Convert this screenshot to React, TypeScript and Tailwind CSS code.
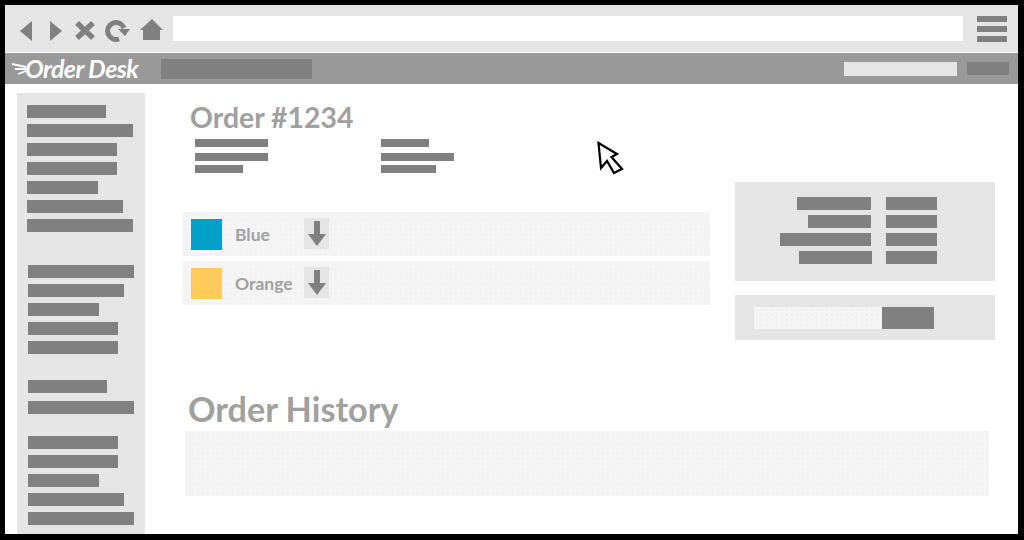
import React from "react";

const Bar = ({ className }: { className: string }) => <div className={`bg-[#808080] ${className}`} />;

const NavIcons = () => (
  <svg width="146" height="28" viewBox="0 0 146 28" className="shrink-0">
    <path d="M0 16 L12 6 V26 Z" fill="#808080" />
    <path d="M30 6 L42 16 L30 26 Z" fill="#808080" />
    <path d="M57 8 L73 23 M73 8 L57 23" stroke="#808080" strokeWidth="5.500" fill="none" />
    <path d="M99 24 A 8.500 8.500 0 1 1 104 13" stroke="#808080" strokeWidth="5" fill="none" />
    <path d="M98 14 H110 L105 21 Z" fill="#808080" />
    <path d="M120 15 L132 4 L143 15 H140 V25 H123 V15 Z" fill="#808080" />
  </svg>
);

const ArrowDown = () => (
  <svg width="18" height="27" viewBox="0 0 18 27">
    <path d="M6 1 H12 V14 H18 L9 26 L0 14 H6 Z" fill="#808080" />
  </svg>
);

const Sidebar = () => (
  <div className="w-[128px] ml-3 mt-[9px] bg-[#e5e5e5] pt-3 pl-[10px] flex flex-col shrink-0">
    <div className="flex flex-col gap-[6px]">
      <Bar className="h-[13px] w-[79px]" />
      <Bar className="h-[13px] w-[106px]" />
      <Bar className="h-[13px] w-[90px]" />
      <Bar className="h-[13px] w-[90px]" />
      <Bar className="h-[13px] w-[71px]" />
      <Bar className="h-[13px] w-[96px]" />
      <Bar className="h-[13px] w-[106px]" />
    </div>
    <div className="flex flex-col gap-[6px] mt-[33px] ml-px">
      <Bar className="h-[13px] w-[106px]" />
      <Bar className="h-[13px] w-[96px]" />
      <Bar className="h-[13px] w-[71px]" />
      <Bar className="h-[13px] w-[90px]" />
      <Bar className="h-[13px] w-[90px]" />
    </div>
    <div className="flex flex-col gap-[8px] mt-[26px] ml-px">
      <Bar className="h-[13px] w-[79px]" />
      <Bar className="h-[13px] w-[106px]" />
    </div>
    <div className="flex flex-col gap-[6px] mt-[22px] ml-px">
      <Bar className="h-[13px] w-[90px]" />
      <Bar className="h-[13px] w-[90px]" />
      <Bar className="h-[13px] w-[71px]" />
      <Bar className="h-[13px] w-[96px]" />
      <Bar className="h-[13px] w-[106px]" />
    </div>
  </div>
);

const ItemRow = ({ color, name, className }: { color: string; name: string; className: string }) => (
  <div className={`h-[44px] bg-[#f4f4f4] bg-[radial-gradient(#f0f0f0_1px,transparent_1px)] bg-[length:5px_5px] flex items-center ${className}`}>
    <div className={`w-[31px] h-[31px] ml-2 shrink-0 ${color}`} />
    <div className="ml-[13px] mt-[2px] w-[69px] text-[17.500px] font-bold text-[#a0a0a0] shrink-0">{name}</div>
    <div className="w-[25px] h-[31px] -mt-px bg-[#e5e5e5] flex items-center justify-center">
      <ArrowDown />
    </div>
  </div>
);

export default function App() {
  return (
    <div className="w-[1024px] h-[540px] bg-black pt-[5px] pl-[5px] pr-[6px] pb-[6px] overflow-hidden" style={{ fontFamily: "Lato, 'Liberation Sans', sans-serif" }}>
      <div className="h-full bg-white flex flex-col">
        {/* browser chrome */}
        <div className="h-[47px] bg-[#e5e5e5] flex items-center pl-[15px] shrink-0">
          <NavIcons />
          <div className="ml-[7px] w-[790px] h-[25px] bg-white" />
          <div className="ml-[14px] flex flex-col gap-[4px]">
            <Bar className="w-[30px] h-[6px]" />
            <Bar className="w-[30px] h-[6px]" />
            <Bar className="w-[30px] h-[6px]" />
          </div>
        </div>
        {/* app header */}
        <div className="h-[31px] mt-px bg-[#999999] flex items-center shrink-0">
          <svg width="16" height="14" viewBox="0 0 16 14" className="ml-[7px] shrink-0">
            <path d="M0 2 L14 5 M3 7 L14 7 M6 12 L14 9" stroke="#fff" strokeWidth="1.800" fill="none" />
          </svg>
          <div className="w-[121px] -ml-[3px] text-[25px] leading-none italic font-bold text-white tracking-[-0.6px] whitespace-nowrap">Order Desk</div>
          <Bar className="ml-[15px] w-[151px] h-[20px]" />
          <div className="ml-[532px] w-[113px] h-[14px] bg-[#e5e5e5]" />
          <Bar className="ml-[10px] w-[42px] h-[13px]" />
        </div>
        {/* body */}
        <div className="flex flex-1 min-h-0">
          <Sidebar />
          <div className="flex-1 flex flex-col relative">
            <div className="flex">
              <div className="ml-[38px] w-[527px] shrink-0">
                <h1 className="ml-[7px] mt-[15px] text-[28.400px] leading-[36px] font-bold text-[#a0a0a0]">Order #1234</h1>
                <div className="flex mt-[4px] ml-[12px]">
                  <div className="flex flex-col w-[186px]">
                    <Bar className="w-[73px] h-[8px]" />
                    <Bar className="w-[73px] h-[8px] mt-[6px]" />
                    <Bar className="w-[48px] h-[8px] mt-[4px]" />
                  </div>
                  <div className="flex flex-col">
                    <Bar className="w-[48px] h-[8px]" />
                    <Bar className="w-[73px] h-[8px] mt-[6px]" />
                    <Bar className="w-[55px] h-[8px] mt-[4px]" />
                  </div>
                </div>
                <ItemRow color="bg-[#00a0c8]" name="Blue" className="mt-[39px]" />
                <ItemRow color="bg-[#ffcc5c]" name="Orange" className="mt-[5px]" />
              </div>
              <div className="ml-[25px] w-[260px] shrink-0 mt-[98px]">
                <div className="h-[99px] bg-[#e5e5e5] pt-[15px] flex">
                  <div className="w-[136px] flex flex-col items-end gap-[5px] shrink-0">
                    <Bar className="w-[74px] h-[13px]" />
                    <Bar className="w-[63px] h-[13px]" />
                    <Bar className="w-[91px] h-[13px]" />
                    <Bar className="w-[73px] h-[13px] mr-[-1px]" />
                  </div>
                  <div className="ml-[15px] flex flex-col gap-[5px]">
                    <Bar className="w-[51px] h-[13px]" />
                    <Bar className="w-[51px] h-[13px]" />
                    <Bar className="w-[51px] h-[13px]" />
                    <Bar className="w-[51px] h-[13px]" />
                  </div>
                </div>
                <div className="mt-[14px] h-[45px] bg-[#e5e5e5] flex items-center pl-[19px]">
                  <div className="w-[128px] h-[22px] bg-[#f4f4f4] bg-[radial-gradient(#eeeeee_1px,transparent_1px)] bg-[length:5px_5px]" />
                  <Bar className="w-[52px] h-[22px]" />
                </div>
              </div>
            </div>
            <h2 className="ml-[43px] mt-[49px] text-[34.200px] leading-[40px] font-bold text-[#a0a0a0]">Order History</h2>
            <div className="ml-[40px] mt-[2px] w-[804px] h-[65px] bg-[#f4f4f4] bg-[radial-gradient(#f0f0f0_1px,transparent_1px)] bg-[length:5px_5px]" />
            {/* mouse cursor */}
            <svg width="28" height="36" viewBox="0 0 28 36" className="absolute left-[451px] top-[55px]">
              <path d="M2.500 4 L21 15 L15.500 18 L26 30 L18 34 L11 22 L5 29 Z" fill="#fff" stroke="#000" strokeWidth="2.200" />
            </svg>
          </div>
        </div>
      </div>
    </div>
  );
}
